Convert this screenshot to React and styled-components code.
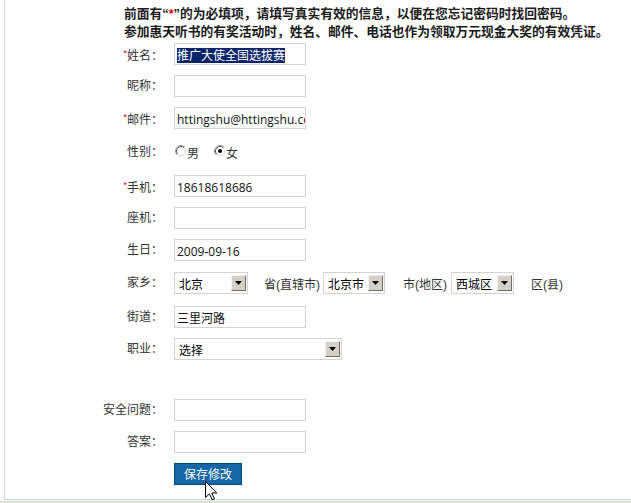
import React from "react";
import styled, { createGlobalStyle } from "styled-components";

const Global = createGlobalStyle`
  html, body { margin: 0; padding: 0; background: #fff; }
  body { font-family: "Liberation Sans", "Noto Sans CJK SC", sans-serif; }
`;

const Page = styled.div`
  width: 631px;
  height: 503px;
  overflow: hidden;
  display: flex;
  flex-direction: column;
`;

const Panel = styled.div`
  box-sizing: border-box;
  height: 500px;
  margin-left: 4px;
  border-left: 1px solid #cfd9e4;
  border-bottom: 1px solid #c6d3e0;
`;

const Footer = styled.div`
  flex: 1;
  border-top: 1px solid #f6f5f0;
  background: #e2dfd2;
`;

const Notice = styled.div`
  padding: 5px 0 0 119px;
  font-family: "Liberation Sans", "Noto Sans CJK SC", sans-serif;
  font-size: 12.75px;
  font-weight: 700;
  line-height: 18px;
  color: #1a1a1a;
  white-space: nowrap;
`;

const Star = styled.span`
  color: #e00000;
`;

const Form = styled.div`
  margin-top: -3px;
  display: flex;
  flex-direction: column;
`;

const Row = styled.div`
  display: grid;
  grid-template-columns: 158px 1fr;
  column-gap: 11px;
  align-items: center;
  height: ${(p) => p.$h || 32}px;
`;

const Label = styled.div`
  text-align: right;
  font-family: "Liberation Sans", "Noto Sans CJK SC", sans-serif;
  font-size: 12px;
  line-height: 14px;
  color: #333;
  white-space: nowrap;
`;

const Req = styled.span`
  color: #e00000;
  font-size: 9px;
  vertical-align: 4px;
`;

const TextBox = styled.div`
  box-sizing: border-box;
  width: 132px;
  height: 22px;
  border: 1px solid #d3d3d3;
  padding: 3px 2px 0 2px;
  display: flex;
  align-items: center;
  overflow: hidden;
  white-space: nowrap;
  font-family: "Open Sans", "Noto Sans CJK SC", sans-serif;
  font-size: 12px;
  color: #111;
  background: #fff;
`;

const Selected = styled.span`
  display: inline-block;
  background: #0a246a;
  color: #fff;
  line-height: 15px;
  padding-left: 0;
`;

const Inline = styled.div`
  display: flex;
  align-items: center;
`;

const SelectBox = styled.div`
  box-sizing: border-box;
  width: ${(p) => p.$w}px;
  height: 22px;
  margin-left: ${(p) => p.$ml || 0}px;
  border: 1px solid #d3d3d3;
  padding: 0 1px 0 4px;
  display: flex;
  align-items: center;
  justify-content: space-between;
  font-family: "Liberation Sans", "Noto Sans CJK SC", sans-serif;
  font-size: 12px;
  color: #000;
  background: #fff;
  white-space: nowrap;
`;

const ArrowBtn = styled.span`
  box-sizing: border-box;
  width: 15px;
  height: 16px;
  background: #d4d0c8;
  border: 1px solid;
  border-color: #f4f3ee #6f6d68 #6f6d68 #f4f3ee;
  display: flex;
  align-items: center;
  justify-content: center;
`;

const Unit = styled.span`
  margin-left: ${(p) => p.$ml || 0}px;
  font-size: 12px;
  color: #333;
  white-space: nowrap;
`;

const RadioGroup = styled.div`
  display: flex;
  align-items: center;
  padding-left: 1px;
  padding-top: 1px;
`;

const RadioItem = styled.label`
  display: flex;
  align-items: center;
  margin-right: ${(p) => p.$mr || 0}px;
  font-size: 12px;
  color: #333;
  svg { margin-top: -3px; }
`;

const Spacer = styled.div`
  height: ${(p) => p.$h}px;
`;

const ButtonWrap = styled.div`
  position: relative;
  width: 68px;
  height: 22px;
`;

const SaveButton = styled.button`
  box-sizing: border-box;
  width: 68px;
  height: 22px;
  padding: 0;
  background: #1466a6;
  border: 1px solid #0b4a80;
  color: #fff;
  font-family: "Noto Sans CJK SC", sans-serif;
  font-size: 12px;
  line-height: 20px;
  cursor: pointer;
`;

const Cursor = styled.svg`
  position: absolute;
  left: 31px;
  top: 18px;
  pointer-events: none;
`;

const DownArrow = () => (
  <svg width="7" height="4" viewBox="0 0 7 4">
    <polygon points="0,0 7,0 3.5,4" fill="#000" />
  </svg>
);

const Select = ({ w, ml, children }) => (
  <SelectBox $w={w} $ml={ml}>
    <span>{children}</span>
    <ArrowBtn>
      <DownArrow />
    </ArrowBtn>
  </SelectBox>
);

const RadioIcon = ({ checked }) => (
  <svg width="12" height="12" viewBox="0 0 12 12">
    <circle cx="6" cy="6" r="4.5" fill="#fff" />
    <path d="M2.11 9.89 A5.5 5.5 0 0 1 9.89 2.11" fill="none" stroke="#9a9a9a" strokeWidth="1" />
    <path d="M9.89 2.11 A5.5 5.5 0 0 1 2.11 9.89" fill="none" stroke="#f2f2f2" strokeWidth="1" />
    <path d="M2.82 9.18 A4.5 4.5 0 0 1 9.18 2.82" fill="none" stroke="#505050" strokeWidth="1" />
    <path d="M9.18 2.82 A4.5 4.5 0 0 1 2.82 9.18" fill="none" stroke="#dcdcdc" strokeWidth="1" />
    {checked && <circle cx="6" cy="6" r="2" fill="#000" />}
  </svg>
);

const Field = ({ label, req, h, children }) => (
  <Row $h={h}>
    <Label>
      {req && <Req>*</Req>}
      {label}
    </Label>
    <div>{children}</div>
  </Row>
);

export default function App() {
  return (
    <>
      <Global />
      <Page>
        <Panel>
          <Notice>
            <div>
              前面有“<Star>*</Star>”的为必填项，请填写真实有效的信息，以便在您忘记密码时找回密码。
            </div>
            <div>参加惠天听书的有奖活动时，姓名、邮件、电话也作为领取万元现金大奖的有效凭证。</div>
          </Notice>
          <Form>
            <Field label="姓名：" req>
              <TextBox>
                <Selected>推广大使全国选拔赛</Selected>
              </TextBox>
            </Field>
            <Field label="昵称：">
              <TextBox />
            </Field>
            <Field label="邮件：" req>
              <TextBox>httingshu@httingshu.com</TextBox>
            </Field>
            <Field label="性别：" h={36}>
              <RadioGroup>
                <RadioItem $mr={15}>
                  <RadioIcon />男
                </RadioItem>
                <RadioItem>
                  <RadioIcon checked />女
                </RadioItem>
              </RadioGroup>
            </Field>
            <Field label="手机：" req>
              <TextBox>18618618686</TextBox>
            </Field>
            <Field label="座机：">
              <TextBox />
            </Field>
            <Field label="生日：">
              <TextBox>2009-09-16</TextBox>
            </Field>
            <Field label="家乡：" h={34}>
              <Inline>
                <Select w={74}>北京</Select>
                <Unit $ml={16}>省(直辖市)</Unit>
                <Select w={62} ml={3}>北京市</Select>
                <Unit $ml={18}>市(地区)</Unit>
                <Select w={63} ml={4}>西城区</Select>
                <Unit $ml={17}>区(县)</Unit>
              </Inline>
            </Field>
            <Field label="街道：" h={33}>
              <TextBox>三里河路</TextBox>
            </Field>
            <Field label="职业：">
              <Select w={168}>选择</Select>
            </Field>
            <Spacer $h={29} />
            <Field label="安全问题：">
              <TextBox />
            </Field>
            <Field label="答案：">
              <TextBox />
            </Field>
            <Row>
              <span />
              <ButtonWrap>
                <SaveButton type="button">保存修改</SaveButton>
                <Cursor width="13" height="20" viewBox="0 0 13 20">
                  <polygon
                    points="0.5,0.5 0.5,16.5 4.5,12.8 7.2,18.8 9.4,17.8 6.8,12 11.8,12"
                    fill="#fff"
                    stroke="#000"
                    strokeWidth="1"
                    strokeLinejoin="miter"
                  />
                </Cursor>
              </ButtonWrap>
            </Row>
          </Form>
        </Panel>
        <Footer />
      </Page>
    </>
  );
}
